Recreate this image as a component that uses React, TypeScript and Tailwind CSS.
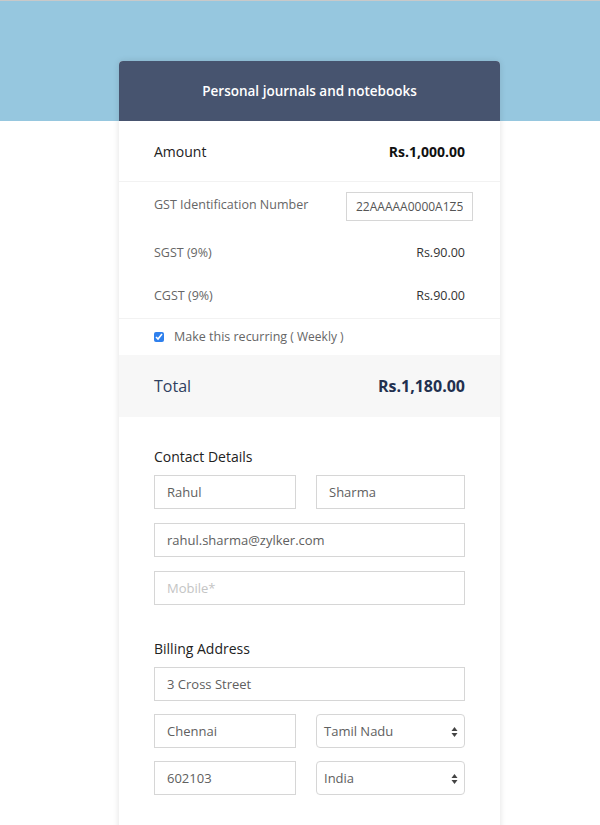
import React from 'react';

const font = { fontFamily: '"Open Sans", "Liberation Sans", sans-serif' };

const TextInput = ({ value, placeholder, className = '' }: { value?: string; placeholder?: string; className?: string }) => (
  <input
    type="text"
    defaultValue={value}
    placeholder={placeholder}
    className={`h-[34px] border border-[#d6d6d6] bg-white px-3 text-[13px] text-[#606060] placeholder:text-[#c4c4c4] outline-none ${className}`}
  />
);

const SelectBox = ({ value }: { value: string }) => (
  <div className="relative h-[34px] w-[149px] rounded-[4px] border border-[#d6d6d6] bg-white">
    <span className="absolute left-[7px] top-[7px] text-[13px] text-[#606060]">{value}</span>
    <svg className="absolute right-[6px] top-[11px]" width="7" height="12" viewBox="0 0 7 12">
      <path d="M3.5 1 L6.5 5 H0.5 Z" fill="#444" />
      <path d="M3.5 11 L6.5 7 H0.5 Z" fill="#444" />
    </svg>
  </div>
);

const Row = ({ label, value }: { label: string; value: string }) => (
  <div className="flex h-[43px] items-center justify-between px-[35px] text-[12.5px]">
    <span className="text-[#666]">{label}</span>
    <span className="text-[#333]">{value}</span>
  </div>
);

export default function App() {
  return (
    <div className="relative min-h-[825px] bg-white" style={font}>
      <div className="h-[121px] border-t border-[#c9c9c9] bg-[#96c7df]" />
      <div className="absolute left-[119px] top-[61px] w-[381px] rounded-t-[4px] bg-white shadow-[0_0_6px_rgba(0,0,0,0.12)]">
        <div className="flex h-[60px] items-center justify-center rounded-t-[4px] bg-[#47546f] text-[13.5px] font-semibold text-white">
          Personal journals and notebooks
        </div>

        <div className="flex h-[61px] items-center justify-between border-b border-[#f2f2f2] px-[35px] text-[14px]">
          <span className="text-[#222]">Amount</span>
          <span className="font-bold text-[#111]">Rs.1,000.00</span>
        </div>

        <div className="flex items-start justify-between pl-[35px] pr-[27px] pt-[10px]">
          <span className="pt-[4px] text-[12.5px] text-[#666]">GST Identification Number</span>
          <input
            type="text"
            defaultValue="22AAAAA0000A1Z5"
            className="h-[29px] w-[127px] border border-[#d6d6d6] px-[9px] text-[12px] text-[#555] outline-none"
          />
        </div>
        <div className="pt-[11px]">
          <Row label="SGST (9%)" value="Rs.90.00" />
          <Row label="CGST (9%)" value="Rs.90.00" />
        </div>

        <div className="flex h-[37px] items-center gap-[10px] border-t border-[#f2f2f2] px-[35px] text-[12.5px] text-[#666]">
          <input type="checkbox" defaultChecked className="h-[10px] w-[10px] accent-[#2f80ed]" />
          <span>
            Make this recurring <span className="text-[12px]">( Weekly )</span>
          </span>
        </div>

        <div className="flex h-[62px] items-center justify-between bg-[#f7f7f7] px-[35px]">
          <span className="text-[16px] text-[#2f3f5f]">Total</span>
          <span className="text-[16px] font-bold text-[#22304f]">Rs.1,180.00</span>
        </div>

        <div className="px-[35px] pt-[29px]">
          <div className="text-[14px] text-[#222]">Contact Details</div>
          <div className="mt-[8px] flex flex-col gap-[14px]">
            <div className="flex justify-between">
              <TextInput value="Rahul" className="w-[142px]" />
              <TextInput value="Sharma" className="w-[149px]" />
            </div>
            <TextInput value="rahul.sharma@zylker.com" className="w-full" />
            <TextInput placeholder="Mobile*" className="w-full" />
          </div>

          <div className="mt-[33px] text-[14px] text-[#222]">Billing Address</div>
          <div className="mt-[8px] flex flex-col gap-[13px] pb-[40px]">
            <TextInput value="3 Cross Street" className="w-full" />
            <div className="flex justify-between">
              <TextInput value="Chennai" className="w-[142px]" />
              <SelectBox value="Tamil Nadu" />
            </div>
            <div className="flex justify-between">
              <TextInput value="602103" className="w-[142px]" />
              <SelectBox value="India" />
            </div>
          </div>
        </div>
      </div>
    </div>
  );
}
